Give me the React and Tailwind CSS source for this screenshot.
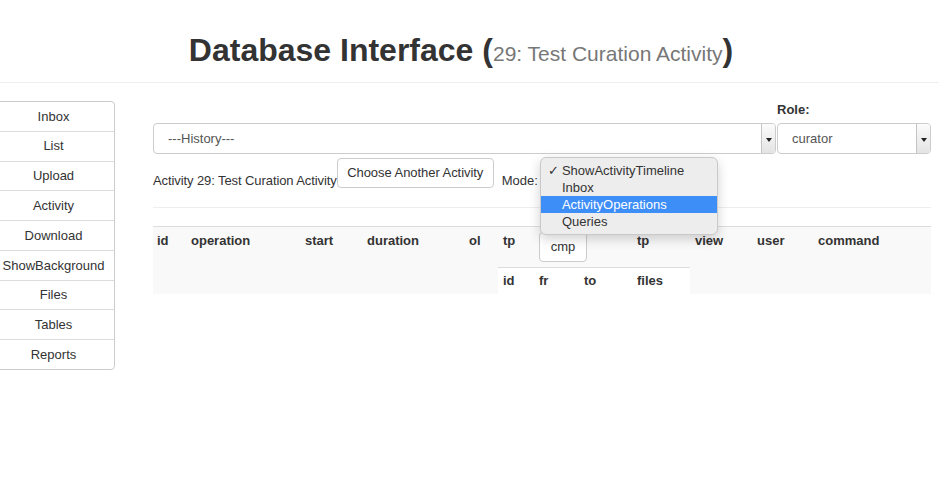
import React from "react";

const font = { fontFamily: '"Liberation Sans", Arial, sans-serif' };

function SelectArrow() {
  return (
    <div className="flex h-full w-[14px] items-center justify-center rounded-r-[3px] border-l border-[#c4c4c4] bg-gradient-to-b from-[#fbfbfb] to-[#e4e4e4]">
      <div className="mt-[2px] h-0 w-0 border-x-[3px] border-t-[4px] border-x-transparent border-t-[#222]" />
    </div>
  );
}

function Select({ text, className }) {
  return (
    <div className={"flex h-[31px] items-stretch rounded-[4px] border border-[#cccccc] bg-white " + className}>
      <div className="flex flex-1 items-center pl-[14px] text-[13px] text-[#555]">{text}</div>
      <SelectArrow />
    </div>
  );
}

const navItems = ["Inbox", "List", "Upload", "Activity", "Download", "ShowBackground", "Files", "Tables", "Reports"];

export default function App() {
  return (
    <div className="min-h-[478px] w-[939px] bg-white text-[#333]" style={font}>
      <div className="h-[83px] border-b border-[#eeeeee] pt-[32px] pr-[17px] text-center">
        <h1 className="text-[32px] font-bold leading-[36px] text-[#333]">
          Database Interface (
          <span className="text-[21px] font-normal text-[#777]">29: Test Curation Activity</span>)
        </h1>
      </div>

      <div className="flex pt-[18px]">
        <div className="ml-[-8px] flex h-[269px] w-[123px] flex-col rounded-r-[4px] border border-[#cccccc]">
          {navItems.map((n, i) => (
            <div
              key={n}
              className={
                "flex flex-1 items-center justify-center text-[13px] text-[#333] " +
                (i > 0 ? "border-t border-[#dddddd]" : "")
              }
            >
              {n}
            </div>
          ))}
        </div>

        <div className="ml-[38px] w-[778px]">
          <div className="flex items-end">
            <Select text="---History---" className="w-[623px]" />
            <div className="ml-[1px] flex w-[154px] flex-col">
              <div className="mb-[4px] text-[13px] font-bold leading-[18px]">Role:</div>
              <Select text="curator" className="w-[154px]" />
            </div>
          </div>

          <div className="mt-[4px] flex h-[30px] items-start">
            <div className="h-[30px] pt-[14px] text-[13px] leading-[18px] tracking-[-0.09px] whitespace-nowrap">Activity 29: Test Curation Activity</div>
            <div className="flex h-[30px] w-[157px] items-center justify-center rounded-[4px] border border-[#cccccc] bg-white text-[13px] tracking-[-0.05px] text-[#333]">
              Choose Another Activity
            </div>
            <div className="ml-[8px] h-[30px] pt-[14px] text-[13px] leading-[18px]">Mode:</div>
            <div className="relative ml-[2px] h-[30px] w-[10px]">
              <div className="absolute left-0 top-[-1px] z-10 w-[178px] rounded-[6px] border border-[#c9c9c9] bg-[#ededed] py-[4px] text-[13px] leading-[17px] text-[#333] shadow-[0_4px_12px_rgba(0,0,0,0.18)]">
                <div className="relative pl-[21px]">
                  <span className="absolute left-[7px] top-0">✓</span>
                  ShowActivityTimeline
                </div>
                <div className="pl-[21px]">Inbox</div>
                <div className="bg-[#3e8ef7] pl-[21px] text-white">ActivityOperations</div>
                <div className="pl-[21px]">Queries</div>
              </div>
            </div>
          </div>

          <div className="mt-[19px] h-px bg-[#eeeeee]" />

          <div className="mt-[18px] flex h-[68px] border-t border-[#dddddd] bg-[#f9f9f9] text-[13px] font-bold leading-[18px] text-[#333]">
            <div className="w-[34px] pl-[4px] pt-[5px]">id</div>
            <div className="w-[114px] pl-[4px] pt-[5px]">operation</div>
            <div className="w-[62px] pl-[4px] pt-[5px]">start</div>
            <div className="w-[102px] pl-[4px] pt-[5px]">duration</div>
            <div className="w-[33px] pl-[4px] pt-[5px]">ol</div>
            <div className="flex w-[192px] flex-col">
              <div className="flex h-[40px]">
                <div className="w-[36px] pl-[5px] pt-[5px]">tp</div>
                <div className="w-[98px] pl-[5px] pt-[5px]">
                  <div className="flex h-[30px] w-[48px] items-center justify-center rounded-[4px] border border-[#cccccc] bg-white font-normal">
                    cmp
                  </div>
                </div>
                <div className="w-[58px] pl-[5px] pt-[5px]">tp</div>
              </div>
              <div className="flex flex-1 border-t border-[#dddddd] bg-white">
                <div className="w-[36px] pl-[5px] pt-[4px]">id</div>
                <div className="w-[45px] pl-[5px] pt-[4px]">fr</div>
                <div className="w-[53px] pl-[5px] pt-[4px]">to</div>
                <div className="w-[58px] pl-[5px] pt-[4px]">files</div>
              </div>
            </div>
            <div className="w-[62px] pl-[5px] pt-[5px]">view</div>
            <div className="w-[61px] pl-[5px] pt-[5px]">user</div>
            <div className="flex-1 pl-[5px] pt-[5px]">command</div>
          </div>
        </div>
      </div>
    </div>
  );
}
